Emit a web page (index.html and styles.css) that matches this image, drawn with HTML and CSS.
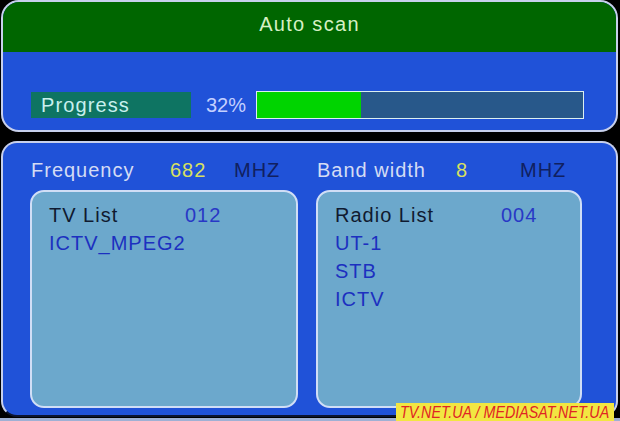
FILE: index.html
```html
<!DOCTYPE html>
<html lang="en">
<head>
  <meta charset="UTF-8" />
  <title>Auto scan</title>
  <link rel="stylesheet" href="styles.css">
</head>
<body>
  <div class="screen">
    <section class="scan-panel">
      <div class="scan-title">Auto scan</div>
      <div class="scan-body">
        <div class="progress-row">
          <div class="progress-label">Progress</div>
          <div class="progress-value">32%</div>
          <div class="progress-bar">
            <div class="progress-fill" style="width: 32%"></div>
          </div>
        </div>
      </div>
    </section>

    <section class="result-panel">
      <div class="result-grid">
        <div class="result-col">
          <div class="info-row">
            <span class="info-label">Frequency</span>
            <span class="info-value">682</span>
            <span class="info-unit">MHZ</span>
          </div>
          <div class="list-box">
            <div class="list-head">
              <span class="list-name">TV List</span>
              <span class="list-count">012</span>
            </div>
            <div class="list-item">ICTV_MPEG2</div>
          </div>
        </div>
        <div class="result-col">
          <div class="info-row">
            <span class="info-label">Band width</span>
            <span class="info-value">8</span>
            <span class="info-unit">MHZ</span>
          </div>
          <div class="list-box">
            <div class="list-head">
              <span class="list-name">Radio List</span>
              <span class="list-count">004</span>
            </div>
            <div class="list-item">UT-1</div>
            <div class="list-item">STB</div>
            <div class="list-item">ICTV</div>
          </div>
        </div>
      </div>
    </section>
    <div class="bottom-strip"></div>

    <div class="watermark"><span class="watermark-text">TV.NET.UA / MEDIASAT.NET.UA</span></div>
  </div>
</body>
</html>
```

FILE: styles.css
```css
body {
  margin: 0;
  background-color: #000;
  font-family: 'Liberation Sans', Arial, sans-serif;
  font-size: 20px;
  letter-spacing: 1px;
}
.screen {
  position: relative;
  width: 620px;
  height: 421px;
  overflow: hidden;
}

/* top panel */
.scan-panel {
  margin: 0 2px 0 1px;
  height: 128px;
  border: 2px solid #c8d0ec;
  border-radius: 18px;
  overflow: hidden;
  background-color: #2052d8;
}
.scan-title {
  height: 50px;
  line-height: 45px;
  background-color: #006600;
  color: #d6f0c4;
  text-align: center;
  letter-spacing: 1.3px;
}
.scan-body {
  padding: 39px 0 0 28px;
}
.progress-row {
  display: flex;
  align-items: center;
  height: 28px;
}
.progress-label {
  width: 150px;
  height: 26px;
  line-height: 26px;
  padding-left: 10px;
  background-color: #0e7462;
  color: #c8f0ee;
  letter-spacing: 1.1px;
}
.progress-value {
  width: 50px;
  margin-left: 15px;
  color: #c4d0ff;
  letter-spacing: 0;
}
.progress-bar {
  width: 326px;
  height: 26px;
  border: 1px solid #dceff0;
  background-color: #28588a;
}
.progress-fill {
  height: 100%;
  background-color: #00d400;
}

/* bottom panel */
.result-panel {
  margin: 9px 2px 0 1px;
  height: 276px;
  border: 2px solid #c8d0ec;
  border-bottom-color: #0c1430;
  border-radius: 16px;
  background-color: #2052d8;
  padding: 13px 0 0 27px;
  box-sizing: border-box;
}
.result-grid {
  display: grid;
  grid-template-columns: 268px 266px;
  gap: 18px;
}
.info-row {
  display: flex;
  height: 28px;
  line-height: 28px;
  margin-bottom: 6px;
  padding-left: 1px;
}
.info-label {
  width: 139px;
  color: #d4dcf4;
}
.info-value {
  width: 64px;
  color: #d8e060;
}
.info-unit {
  color: #102060;
}
.list-box {
  height: 218px;
  box-sizing: border-box;
  border: 2px solid #d0def6;
  border-radius: 14px;
  background-color: #6ca8cc;
  padding: 9px 0 0 17px;
}
.list-head,
.list-item {
  height: 28px;
  line-height: 28px;
}
.list-head {
  display: flex;
}
.list-name {
  color: #101a30;
}
.result-col:first-child .list-name {
  width: 136px;
}
.result-col:last-child .list-name {
  width: 166px;
}
.list-count {
  color: #2838c6;
}
.list-item {
  color: #1c30c0;
}

.bottom-strip {
  height: 3px;
  margin-top: 1px;
  background-color: #9fb0d4;
}

.watermark {
  position: absolute;
  right: 6px;
  bottom: 0;
  width: 218px;
  height: 18px;
  line-height: 19px;
  overflow: hidden;
  white-space: nowrap;
  background-color: #f2e642;
  color: #e02424;
  font-style: italic;
  font-size: 17px;
  letter-spacing: 0;
  text-align: center;
}
.watermark-text {
  display: inline-block;
  transform: scaleX(0.84);
  transform-origin: center;
  margin: 0 -20px;
}
```
